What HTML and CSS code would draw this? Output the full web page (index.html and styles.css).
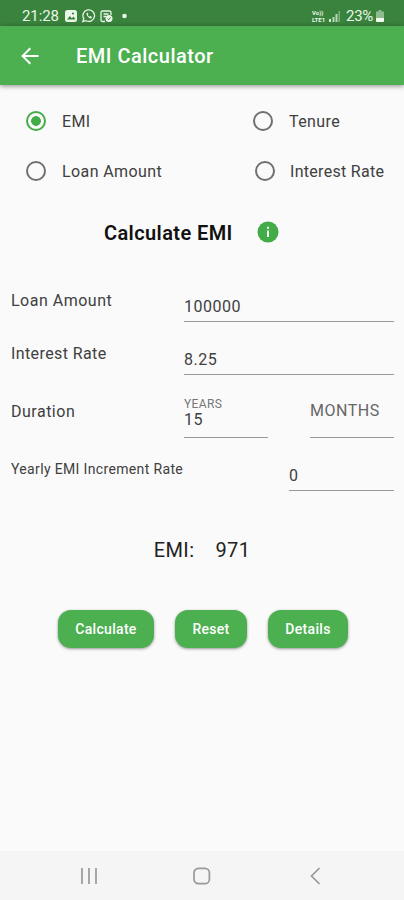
FILE: index.html
```html
<!DOCTYPE html>
<html lang="en">
<head>
  <meta charset="UTF-8">
  <title>EMI Calculator</title>
  <link rel="stylesheet" href="styles.css">
</head>
<body>
<div class="status">
  <span class="time">21:28</span>
  <svg class="notice" width="64" height="14" viewBox="0 0 64 14">
    <rect x="0" y="1" width="12" height="12" rx="2.5" fill="#eaf6e8"/>
    <path d="M2 10.5 4.8 7l2 2.2L8.6 7.5 10.5 10.5z" fill="#3a833d"/>
    <circle cx="8" cy="4.5" r="1.1" fill="#3a833d"/>
    <path d="M17.8 12.6l1-3a5.8 5.8 0 1 1 2.2 2.1z" fill="none" stroke="#eaf6e8" stroke-width="1.3"/>
    <path d="M21.6 4.2c-.8 1.8 2.4 5.4 4.5 5.2l1-1.4-1.8-1-.8.7c-.8-.3-1.4-1-1.7-1.8l.6-.8-.8-1.5z" fill="#eaf6e8"/>
    <path d="M46 6V3.5A1.5 1.5 0 0 0 44.500 2H37.500A1.500 1.500 0 0 0 36 3.500V11a1.500 1.500 0 0 0 1.500 1.500H40M38.500 5h5M38.500 7.500h2.500" fill="none" stroke="#eaf6e8" stroke-width="1.300"/>
    <circle cx="44" cy="9.500" r="3.500" fill="#eaf6e8"/>
    <path d="M42.500 9.600l1.200 1.100 2-2.300" fill="none" stroke="#3a833d"/>
    <circle cx="59.500" cy="7" r="2.300" fill="#eaf6e8"/>
  </svg>
  <span class="volte"><span>Vo))</span><span>LTE1</span></span>
  <svg class="signal" width="12" height="11" viewBox="0 0 12 11">
    <path d="M0 8h2v3H0z" fill="#d5ead3"/>
    <path d="M3.500 6h2v5h-2zM6.500 3h2v8h-2z" fill="#b5d8b3"/>
    <path d="M9.500 0h1.500v11H9.500z" fill="#7fb17f"/>
  </svg>
  <span class="percent">23%</span>
  <svg class="battery" width="8" height="12" viewBox="0 0 8 12">
    <path d="M2.500 0h3v1.500H8V8H0V1.500h2.500z" fill="#8fbc8f"/>
    <path d="M0 8h8v3a1 1 0 0 1-1 1H1a1 1 0 0 1-1-1z" fill="#f2faf1"/>
  </svg>
</div>
<header class="bar">
  <svg width="18" height="18" viewBox="0 0 18 18" fill="none" stroke="#fff" stroke-width="2">
    <path d="M17.500 9H2M9.300 1.300 1.600 9l7.700 7.700"/>
  </svg>
  <h1>EMI Calculator</h1>
</header>
<main>
  <div class="modes">
    <label class="mode mode_active"><i></i><span>EMI</span></label>
    <label class="mode"><i></i><span>Tenure</span></label>
    <label class="mode"><i></i><span>Loan Amount</span></label>
    <label class="mode mode_rate"><i></i><span>Interest Rate</span></label>
  </div>
  <div class="heading">
    <h2>Calculate EMI</h2>
    <svg width="22" height="22" viewBox="0 0 22 22">
      <circle cx="11" cy="11" r="10.500" fill="#43ab48"/>
      <path d="M10 5.800h2v2h-2zM10 9.500h2v6.500h-2z" fill="#f0fff0"/>
    </svg>
  </div>
  <div class="row">
    <span class="name">Loan Amount</span>
    <div class="field">100000</div>
  </div>
  <div class="row">
    <span class="name name_rate">Interest Rate</span>
    <div class="field">8.25</div>
  </div>
  <div class="row row_duration">
    <span class="name">Duration</span>
    <div class="field years"><small>YEARS</small><span>15</span></div>
    <div class="field months">MONTHS</div>
  </div>
  <div class="row row_yearly">
    <span class="name">Yearly EMI Increment Rate</span>
    <div class="field">0</div>
  </div>
  <div class="result"><span>EMI:</span><span>971</span></div>
  <div class="buttons">
    <button class="calc">Calculate</button>
    <button class="reset">Reset</button>
    <button class="details">Details</button>
  </div>
</main>
<nav class="nav">
  <svg width="18" height="18" viewBox="0 0 18 18" fill="none" stroke="#999" stroke-width="1.700">
    <path d="M2 1v16M9 1v16M16 1v16"/>
  </svg>
  <svg width="18" height="18" viewBox="0 0 18 18" fill="none" stroke="#999" stroke-width="1.700">
    <rect x="1" y="1.300" width="15.400" height="15.400" rx="4.500"/>
  </svg>
  <svg width="18" height="18" viewBox="0 0 18 18" fill="none" stroke="#999" stroke-width="1.700">
    <path d="M13.500 1 5.500 9l8 8"/>
  </svg>
</nav>
</body>
</html>
```
FILE: styles.css
```css
*{
  margin: 0;
  padding: 0;
  box-sizing: border-box;
}
body{
  display: flex;
  flex-direction: column;
  width: 404px;
  height: 900px;
  overflow: hidden;
  background-color: #fafafa;
  color: #404040;
  font-family: Roboto, "Liberation Sans", sans-serif;
  font-size: 16px;
}
.status{
  display: flex;
  align-items: center;
  height: 26px;
  padding: 5px 20px 0 22px;
  background-color: #3a833d;
  color: #eaf6e8;
}
.time{
  width: 43px;
  font-size: 15px;
  letter-spacing: -0.1px;
}
.volte{
  display: flex;
  flex-direction: column;
  width: 16px;
  margin-left: auto;
  font-size: 6px;
  font-weight: bold;
  line-height: 7px;
}
.signal{
  margin: 1px 5px 0 1px;
}
.percent{
  width: 28px;
  font-size: 15px;
  letter-spacing: -0.3px;
}
.battery{
  margin-left: 2px;
}
.bar{
  display: flex;
  align-items: center;
  gap: 37px;
  height: 59px;
  padding: 0 21px;
  background-color: #4caf50;
  color: #fff;
  box-shadow: 0 1px 5px rgba(0, 0, 0, 0.45);
}
h1{
  padding-top: 1px;
  font-size: 20px;
  font-weight: 500;
  letter-spacing: 0.5px;
}
main{
  flex: 1;
}
.modes{
  display: grid;
  grid-template-columns: 227px 1fr;
  grid-auto-rows: 50px;
  padding: 11px 0 0 26px;
}
.mode{
  display: flex;
  align-items: center;
  gap: 16px;
  letter-spacing: 0.4px;
}
.mode i{
  width: 20px;
  height: 20px;
  border: 2px solid #707070;
  border-radius: 50%;
}
.mode_active i{
  border-color: #43ab48;
  background: radial-gradient(circle, #43ab48 4.5px, transparent 5.2px);
}
.mode_rate{
  padding-left: 2px;
  gap: 15px;
  letter-spacing: 0.3px;
}
.heading{
  display: flex;
  align-items: center;
  gap: 23px;
  height: 44px;
  margin-top: 14px;
  padding-left: 104px;
  color: #111;
}
h2{
  width: 130px;
  padding-top: 2px;
  font-size: 20px;
  font-weight: 600;
  letter-spacing: 0.4px;
  white-space: nowrap;
}
.row{
  display: flex;
  justify-content: space-between;
  height: 53px;
  padding: 0 10px 0 11px;
  letter-spacing: 0.5px;
}
.heading + .row{
  margin-top: 16px;
}
.name{
  padding-top: 21px;
}
.name_rate{
  letter-spacing: 0.4px;
}
.field{
  width: 210px;
  height: 52px;
  padding-top: 27px;
  border-bottom: 1px solid #999;
}
.row_duration{
  height: 63px;
}
.row_duration .name{
  flex: 1;
  padding-top: 26px;
}
.row_duration .field{
  width: 84px;
  height: 62px;
}
.field.years{
  display: flex;
  flex-direction: column;
  margin-right: 42px;
  padding-top: 20px;
  line-height: 16px;
}
.years small{
  color: #777;
  font-size: 12px;
  letter-spacing: 0.4px;
}
.field.months{
  padding-top: 25px;
  color: #666;
}
.row_yearly .name{
  padding-top: 22px;
  font-size: 14px;
  letter-spacing: 0.35px;
}
.row_yearly .field{
  width: 105px;
}
.result{
  display: flex;
  justify-content: center;
  gap: 21px;
  margin-top: 45px;
  color: #222;
  font-size: 20px;
  line-height: 26px;
  letter-spacing: 0.4px;
}
.buttons{
  display: flex;
  gap: 21px;
  margin-top: 47px;
  padding-left: 58px;
}
button{
  height: 38px;
  border: none;
  border-radius: 13px;
  background-color: #4caf50;
  color: #fff;
  font: 500 14px Roboto, sans-serif;
  letter-spacing: 0.3px;
  box-shadow: 0 1px 3px rgba(0, 0, 0, 0.4);
}
.calc{
  width: 96px;
}
.reset{
  width: 72px;
}
.details{
  width: 80px;
}
.nav{
  display: flex;
  justify-content: space-between;
  height: 49px;
  padding: 16px 80px 0 80px;
  background-color: #f5f5f5;
}
```
